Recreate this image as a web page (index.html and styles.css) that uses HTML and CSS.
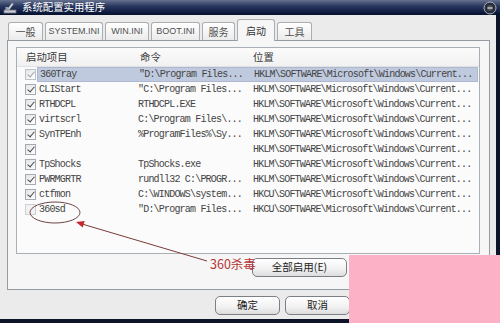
FILE: index.html
```html
<!DOCTYPE html>
<html lang="zh-CN">
<head>
  <meta charset="UTF-8">
  <title>系统配置实用程序</title>
  <link rel="stylesheet" href="styles.css">
</head>
<body>
  <div class="window">
    <!-- 标题栏 -->
    <div class="titlebar">
      <svg class="app-icon" width="14" height="12" viewBox="0 0 14 12">
        <rect x="1" y="8" width="12" height="3" fill="#c9ccd3" stroke="#6d7382" stroke-width="0.8"/>
        <path d="M4 8 L9 1 L10.5 2 L6 8 Z" fill="#e6e8ec" stroke="#7d8494" stroke-width="0.6"/>
        <rect x="2.5" y="5" width="3" height="3" fill="#9aa3b8"/>
      </svg>
      <span class="title">系统配置实用程序</span>
      <svg class="close-btn" width="14" height="14" viewBox="0 0 14 14">
        <circle cx="7" cy="7" r="6" fill="#2c3142" stroke="#a9adb6" stroke-width="1"/>
        <circle cx="7" cy="7" r="3.6" fill="#4b505c" stroke="#1c1f27" stroke-width="0.8"/>
        <rect x="4.5" y="6.3" width="5" height="1.4" fill="#c8ccd4"/>
      </svg>
    </div>

    <div class="dialog">
      <!-- 选项卡 -->
      <div class="tabs">
        <div class="tab cjk w-general">一般</div>
        <div class="tab w-system">SYSTEM.INI</div>
        <div class="tab w-win">WIN.INI</div>
        <div class="tab w-boot">BOOT.INI</div>
        <div class="tab cjk w-svc">服务</div>
        <div class="tab cjk w-start active">启动</div>
        <div class="tab cjk w-tools">工具</div>
      </div>

      <div class="tab-panel">
        <!-- 启动项目列表 -->
        <div class="startup-list">
          <div class="list-header">
            <span class="h-name">启动项目</span>
            <span class="h-cmd">命令</span>
            <span class="h-loc">位置</span>
          </div>

          <div class="row selected">
            <span class="chk on dim"></span>
            <div class="cells"><span class="c-name">360Tray</span><span class="c-cmd">"D:\Program Files...</span><span class="c-loc">HKLM\SOFTWARE\Microsoft\Windows\Current...</span></div>
          </div>
          <div class="row">
            <span class="chk on"></span>
            <div class="cells"><span class="c-name">CLIStart</span><span class="c-cmd">"C:\Program Files...</span><span class="c-loc">HKLM\SOFTWARE\Microsoft\Windows\Current...</span></div>
          </div>
          <div class="row">
            <span class="chk on"></span>
            <div class="cells"><span class="c-name">RTHDCPL</span><span class="c-cmd">RTHDCPL.EXE</span><span class="c-loc">HKLM\SOFTWARE\Microsoft\Windows\Current...</span></div>
          </div>
          <div class="row">
            <span class="chk on"></span>
            <div class="cells"><span class="c-name">virtscrl</span><span class="c-cmd">C:\Program Files\...</span><span class="c-loc">HKLM\SOFTWARE\Microsoft\Windows\Current...</span></div>
          </div>
          <div class="row">
            <span class="chk on"></span>
            <div class="cells"><span class="c-name">SynTPEnh</span><span class="c-cmd">%ProgramFiles%\Sy...</span><span class="c-loc">HKLM\SOFTWARE\Microsoft\Windows\Current...</span></div>
          </div>
          <div class="row">
            <span class="chk on"></span>
            <div class="cells"><span class="c-name"></span><span class="c-cmd"></span><span class="c-loc">HKLM\SOFTWARE\Microsoft\Windows\Current...</span></div>
          </div>
          <div class="row">
            <span class="chk on"></span>
            <div class="cells"><span class="c-name">TpShocks</span><span class="c-cmd">TpShocks.exe</span><span class="c-loc">HKLM\SOFTWARE\Microsoft\Windows\Current...</span></div>
          </div>
          <div class="row">
            <span class="chk on"></span>
            <div class="cells"><span class="c-name">PWRMGRTR</span><span class="c-cmd">rundll32 C:\PROGR...</span><span class="c-loc">HKLM\SOFTWARE\Microsoft\Windows\Current...</span></div>
          </div>
          <div class="row">
            <span class="chk on"></span>
            <div class="cells"><span class="c-name">ctfmon</span><span class="c-cmd">C:\WINDOWS\system...</span><span class="c-loc">HKCU\SOFTWARE\Microsoft\Windows\Current...</span></div>
          </div>
          <div class="row">
            <span class="chk"></span>
            <div class="cells"><span class="c-name">360sd</span><span class="c-cmd">"D:\Program Files...</span><span class="c-loc">HKCU\SOFTWARE\Microsoft\Windows\Current...</span></div>
          </div>
        </div>

        <div class="panel-actions">
          <button class="btn wide">全部启用(E)</button>
          <button class="btn wide">全部禁用(D)</button>
        </div>
      </div>

      <!-- 底部按钮 -->
      <div class="dialog-actions">
        <button class="btn">确定</button>
        <button class="btn">取消</button>
        <button class="btn">应用(A)</button>
        <button class="btn">帮助</button>
      </div>
    </div>

    <!-- 红色标注 -->
    <svg class="annotation" width="500" height="323" viewBox="0 0 500 323">
      <ellipse cx="55" cy="212.5" rx="25" ry="10.5" fill="none" stroke="#6e4646" stroke-width="1"/>
      <line x1="207" y1="261" x2="83" y2="224.3" stroke="#7a3a3a" stroke-width="1"/>
      <polygon points="76,222 84.7,220.9 82.7,227.6" fill="#c4262c"/>
    </svg>
    <span class="annotation-label">360杀毒</span>

    <!-- 涂抹块 -->
    <div class="paint-block"></div>
  </div>
</body>
</html>
```

FILE: styles.css
```css
/* ------------------------------
   变量
   ------------------------------ */
:root {
  --frame: #0e1427;
  --dialog-bg: #ebebeb;
  --panel-bg: #f6f6f6;
  --list-bg: #fbfbfb;
  --border: #939ba3;
  --text: #353535;
  --cjk: "Noto Sans CJK SC", "Liberation Sans", sans-serif;
  --mono: "Liberation Mono", "Noto Sans CJK SC", monospace;
}

* {
  margin: 0;
  padding: 0;
  box-sizing: border-box;
}

body {
  background: var(--frame);
  font-family: var(--cjk);
  color: var(--text);
}

.window {
  position: relative;
  width: 500px;
  height: 323px;
  background: var(--frame);
  overflow: hidden;
}

/* ------------------------------
   标题栏
   ------------------------------ */
.titlebar {
  height: 15px;
  display: flex;
  align-items: center;
  padding-left: 3px;
  background: linear-gradient(180deg, #66718f 0%, #2a3860 40%, #0d1a3e 85%, #07102a 100%);
}
.app-icon {
  flex: 0 0 auto;
}
.title {
  margin-left: 5px;
  color: #ffffff;
  font-size: 10.4px;
  line-height: 1;
}
.close-btn {
  margin-left: auto;
  margin-right: 3px;
}

/* ------------------------------
   对话框主体
   ------------------------------ */
.dialog {
  width: 496px;
  height: 304px;
  background: var(--dialog-bg);
}

.tabs {
  height: 25px;
  display: flex;
  align-items: flex-end;
  gap: 2px;
  padding-left: 8px;
}
.tab {
  height: 18px;
  display: flex;
  align-items: center;
  justify-content: center;
  background: linear-gradient(180deg, #ffffff, #ebebeb);
  border: 1px solid #a9aeb3;
  border-bottom: none;
  border-radius: 3px 3px 0 0;
  font-family: "Liberation Sans", sans-serif;
  font-size: 9px;
  color: #505050;
  line-height: 1;
}
.tab.cjk {
  font-family: var(--cjk);
  font-size: 10px;
}
.tab.active {
  position: relative;
  z-index: 1;
  height: 22px;
  margin-bottom: -1px;
  background: var(--panel-bg);
  color: #333;
}
.w-general { width: 35px; }
.w-system { width: 58px; }
.w-win { width: 44px; }
.w-boot { width: 49px; }
.w-svc { width: 33px; }
.w-start { width: 38px; }
.w-tools { width: 35px; }

.tab-panel {
  margin-left: 7px;
  width: 483px;
  height: 250px;
  background: var(--panel-bg);
  border: 1px solid var(--border);
  padding: 6px 9px 0 8px;
}

/* ------------------------------
   启动列表
   ------------------------------ */
.startup-list {
  width: 464px;
  height: 207px;
  background: var(--list-bg);
  border: 1px solid #a8afb6;
}

.list-header {
  height: 19px;
  display: grid;
  grid-template-columns: 120px 114px 1fr;
  align-items: center;
  border-bottom: 1px solid #e2e2e2;
  background: linear-gradient(180deg, #fbfbfb, #f1f1f1);
  font-size: 10.4px;
  line-height: 1;
  color: #3a3a3a;
}
.h-name { padding-left: 9px; }
.h-cmd { padding-left: 3px; }
.h-loc { padding-left: 2px; }

.row {
  height: 15px;
  display: flex;
  align-items: center;
}

.chk {
  position: relative;
  flex: 0 0 11px;
  width: 11px;
  height: 11px;
  margin-left: 8px;
  margin-right: 1px;
  border: 1px solid #a3acb6;
  background: linear-gradient(135deg, #e4e4e4, #ffffff);
}
.chk.on::after {
  content: "";
  position: absolute;
  left: 3px;
  top: 0;
  width: 3px;
  height: 6px;
  border-right: 1.5px solid #4a4a4a;
  border-bottom: 1.5px solid #4a4a4a;
  transform: rotate(40deg);
}
.chk.dim {
  border-color: #bcc2ca;
}
.chk.dim::after {
  border-color: #a2a2a2;
}
.row:last-child .chk {
  border-color: #cdd1d6;
  background: #f2f2f2;
}

.cells {
  flex: 1;
  height: 15px;
  margin-right: 1px;
  display: flex;
  align-items: center;
  font-family: var(--mono);
  font-size: 10px;
  letter-spacing: -0.8px;
  color: #444444;
  white-space: nowrap;
  overflow: hidden;
}
.row.selected .cells {
  background: #c0cadf;
  border: 1px solid #aeb9d1;
}
.c-name {
  flex: 0 0 101px;
  padding-left: 2px;
}
.c-cmd {
  flex: 0 0 115px;
}
.c-loc {
  flex: 1;
}

/* ------------------------------
   按钮
   ------------------------------ */
.btn {
  height: 19px;
  width: 65px;
  border: 1px solid #7b7f86;
  border-radius: 5px;
  background: linear-gradient(180deg, #ffffff 0%, #f1f1f1 60%, #dcdcdc 100%);
  font-family: var(--cjk);
  font-size: 10.5px;
  line-height: 1;
  color: #222;
}
.btn.wide {
  width: 95px;
}

.panel-actions {
  margin-top: 4px;
  display: flex;
  justify-content: flex-end;
  gap: 38px;
}

.dialog-actions {
  height: 29px;
  padding-top: 6px;
  padding-right: 6px;
  display: flex;
  justify-content: flex-end;
  gap: 5px;
}

/* ------------------------------
   标注
   ------------------------------ */
.annotation {
  position: absolute;
  top: 0;
  left: 0;
  pointer-events: none;
}
.annotation-label {
  position: absolute;
  left: 210px;
  top: 257px;
  font-size: 12.5px;
  line-height: 13px;
  color: #b53434;
}

.paint-block {
  position: absolute;
  left: 349px;
  top: 255px;
  right: 0;
  bottom: 0;
  background: #fcb1c7;
}
```
